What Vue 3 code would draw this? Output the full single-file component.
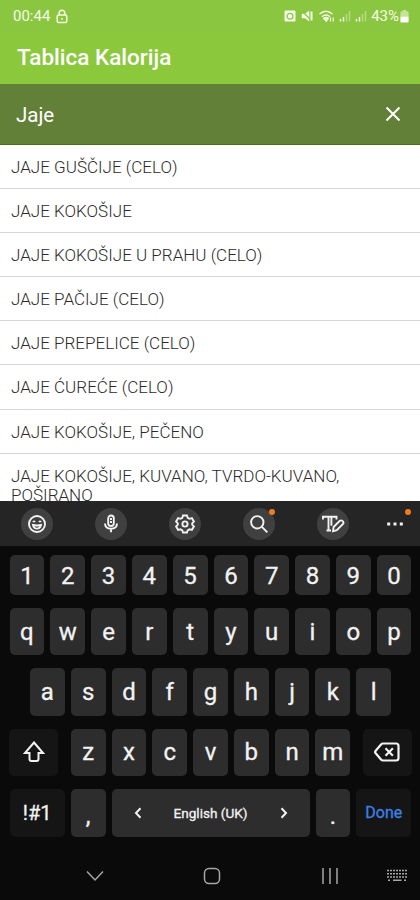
<template>
  <div class="screen">
    <div class="status-bar">
      <span class="time">00:44</span>
      <svg class="lock" viewBox="0 0 12 15">
        <rect x="1.2" y="6" width="9.6" height="7.6" rx="1.4" />
        <path d="M3.2 6V4a2.8 2.8 0 0 1 5.6 0v2M6 9v1.8" />
      </svg>
      <div class="status-icons">
        <svg class="alarm" viewBox="0 0 12 12">
          <path d="M1 1h10v10H1z" fill="currentColor" />
          <circle cx="6" cy="6.2" r="2.9" class="cut" />
          <path d="M6 4.7v1.7h1.4" class="thin" />
        </svg>
        <svg class="mute" viewBox="0 0 12 12">
          <path d="M1 4h3l4-3v10L4 8H1z" fill="currentColor" />
          <path d="M1 1l10 10" class="cut" />
          <path d="M10.5 1.5v9" class="bold" />
        </svg>
        <svg class="wifi" viewBox="0 0 16 13">
          <path d="M.5 4q6.500-5.600 13 0M3 6.700q4-3.400 8 0" />
          <path d="M4.800 8.300q2.200-1.800 4.400 0L7.200 11z" fill="currentColor" />
          <path d="M11.500 7.500v4M14.200 7.500v4" class="thin" />
        </svg>
        <svg v-for="n in 2" :key="n" class="signal" viewBox="0 0 12 12">
          <path d="M1.5 9v2.5M4.5 7v4.5" />
          <path d="M7.5 4v7.5M10.5 1v10.5" class="faint" />
        </svg>
        <span class="percent">43%</span>
        <svg class="battery" viewBox="0 0 9 13">
          <path d="M2.8 0h3.4v1.2H7.6q1 0 1 1V6.5H.4V2.2q0-1 1-1h1.4z" class="battery-empty" />
          <path d="M.4 6.5h8.2v5q0 1-1 1H1.4q-1 0-1-1z" class="battery-full" />
        </svg>
      </div>
    </div>

    <header class="app-bar">Tablica Kalorija</header>

    <div class="search-bar">
      <span class="query">{{ query }}</span>
      <svg class="clear" viewBox="0 0 16 16" @click="query = ''">
        <path d="M1.5 1.5l13 13M14.5 1.5l-13 13" />
      </svg>
    </div>

    <ul class="results">
      <li v-for="food in foods" :key="food" class="result">{{ food }}</li>
    </ul>

    <div class="keyboard">
      <div class="toolbar">
        <span class="tool">
          <svg viewBox="0 0 20 20">
            <circle cx="10" cy="10" r="8" />
            <path d="M6 11q4 1 8 0q-.8 3.6-4 3.6T6 11zM6 8q1-1.3 2 0M12 8q1-1.3 2 0" />
          </svg>
        </span>
        <span class="tool">
          <svg viewBox="0 0 20 20">
            <rect x="7.2" y="1.5" width="5.6" height="10.5" rx="2.8" />
            <path d="M4 9.5q0 5.2 6 5.2t6-5.2M10 14.7v3.6M9 5h2M9 8h2" />
          </svg>
        </span>
        <span class="tool">
          <svg viewBox="0 0 20 20">
            <path d="M8 1.5h4l.7 2.3 1.8 1 2.4-.6 2 3.4-1.7 1.8v1.3l1.7 1.8-2 3.4-2.4-.6-1.8 1-.7 2.2H8l-.7-2.2-1.8-1-2.400.6-2-3.4 1.700-1.800V9.400L1.100 7.600l2-3.400 2.400.6 1.800-1z" />
            <circle cx="10" cy="10" r="2.6" />
          </svg>
        </span>
        <span class="tool has-dot">
          <svg viewBox="0 0 20 20">
            <circle cx="8.3" cy="8.3" r="6.2" />
            <path d="M12.9 12.9l5.4 5.4" />
          </svg>
        </span>
        <span class="tool">
          <svg class="wide" viewBox="0 0 24 20">
            <path d="M2 5.5V2.7h13.500v2.800M7.500 2.700v13.600M10.400 2.700v9M5.500 16.500h4.500" />
            <path d="M12 17.300l.6-4.300 6.200-6.200q1.600-1 2.900.3t.3 2.900l-6.200 6.200z" />
          </svg>
        </span>
        <span class="tool plain has-dot">
          <svg viewBox="0 0 20 20">
            <path d="M2.2 8.500h3v3h-3zM8.500 8.500h3v3h-3zM14.800 8.500h3v3h-3z" class="dots" />
          </svg>
        </span>
      </div>

      <div class="keys">
        <div class="row digits">
          <span v-for="k in '1234567890'" :key="k" class="key">{{ k }}</span>
        </div>
        <div class="row">
          <span v-for="k in 'qwertyuiop'" :key="k" class="key">{{ k }}</span>
        </div>
        <div class="row">
          <span v-for="k in 'asdfghjkl'" :key="k" class="key">{{ k }}</span>
        </div>
        <div class="row spread">
          <span class="key dark shift">
            <svg viewBox="0 0 22 22">
              <path d="M11 1.500L20 12h-4.500v6q0 2-2 2h-5q-2 0-2-2v-6H2z" />
            </svg>
          </span>
          <div class="row">
            <span v-for="k in 'zxcvbnm'" :key="k" class="key">{{ k }}</span>
          </div>
          <span class="key dark backspace">
            <svg viewBox="0 0 26 20">
              <path d="M9 1.500h13q2.500 0 2.500 2.500v12q0 2.500-2.500 2.500H9q-1.200 0-2-1L1.500 11q-.8-1 0-2L7 2.500q.8-1 2-1z" />
              <path d="M11.500 6.300l7.400 7.400M18.900 6.300l-7.400 7.400" />
            </svg>
          </span>
        </div>
        <div class="row">
          <span class="key dark symbols">!#1</span>
          <span class="key punct">,</span>
          <span class="key space">
            <svg viewBox="0 0 8 12"><path d="M6.500 1.300L2 6l4.500 4.700" /></svg>
            <span>English (UK)</span>
            <svg viewBox="0 0 8 12"><path d="M1.500 1.300L6 6l-4.500 4.700" /></svg>
          </span>
          <span class="key punct">.</span>
          <span class="key dark done">Done</span>
        </div>
      </div>

      <nav class="nav-bar">
        <svg class="nav-hide" viewBox="0 0 18 12"><path d="M1 1.500l8 8.500 8-8.500" /></svg>
        <svg class="nav-home" viewBox="0 0 18 18"><rect x="1.500" y="1.500" width="15" height="15" rx="4.500" /></svg>
        <svg class="nav-recent" viewBox="0 0 18 18"><path d="M2 1v16M9 1v16M16 1v16" /></svg>
        <svg class="nav-keyboard" viewBox="0 0 20 13">
          <path d="M0 1.500h20M0 4.800h20M0 8.100h20" class="dashes" />
          <path d="M1 11.300h2M6 11.300h8.500M17 11.300h2" />
        </svg>
      </nav>
    </div>
  </div>
</template>

<script setup>
import { ref } from 'vue';

const query = ref('Jaje');

const foods = [
  'JAJE GUŠČIJE (CELO)',
  'JAJE KOKOŠIJE',
  'JAJE KOKOŠIJE U PRAHU (CELO)',
  'JAJE PAČIJE (CELO)',
  'JAJE PREPELICE (CELO)',
  'JAJE ĆUREĆE (CELO)',
  'JAJE KOKOŠIJE, PEČENO',
  'JAJE KOKOŠIJE, KUVANO, TVRDO-KUVANO, POŠIRANO'
];
</script>

<style>
body {
  margin: 0;
}
</style>

<style scoped>
.screen {
  display: flex;
  flex-direction: column;
  width: 420px;
  height: 900px;
  overflow: hidden;
  background: #fff;
  font-family: Roboto, "Liberation Sans", sans-serif;
}

svg {
  display: block;
  flex: none;
  fill: none;
  stroke: currentColor;
  stroke-width: 1.5;
}

.status-bar {
  display: flex;
  align-items: center;
  box-sizing: border-box;
  height: 32px;
  padding: 0 11px 0 13px;
  background: #8bc640;
  color: #f4fbe8;
  font-size: 15px;
}

.lock {
  width: 12px;
  height: 15px;
  margin-left: 6px;
}

.status-icons {
  display: flex;
  align-items: center;
  margin-left: auto;
}

.alarm {
  width: 12px;
  height: 12px;
  margin-right: 5px;
  stroke-width: 1;
}

.mute {
  width: 12px;
  height: 12px;
  margin-right: 6px;
  stroke-width: 0.5;
}

.cut {
  stroke: #8bc640;
  stroke-width: 1.2;
}

.thin {
  stroke-width: 1.2;
}

.bold {
  stroke-width: 2;
}

.wifi {
  width: 16px;
  height: 13px;
  margin-right: 4px;
}

.signal {
  width: 12px;
  height: 12px;
  margin-right: 4px;
}

.faint {
  opacity: 0.4;
}

.battery {
  width: 9px;
  height: 13px;
  margin-left: 1px;
  stroke: none;
}

.battery-empty {
  fill: #c5e39b;
}

.battery-full {
  fill: #fff;
}

.app-bar {
  height: 52px;
  padding-left: 17px;
  background: #8cc83c;
  color: #fff;
  font-size: 22.5px;
  font-weight: 500;
  line-height: 50px;
}

.search-bar {
  display: flex;
  align-items: center;
  justify-content: space-between;
  box-sizing: border-box;
  height: 61px;
  padding: 0 19px 0 16px;
  border-bottom: 1px solid #4f6b1c;
  background: #638038;
  color: #fff;
  font-size: 20.5px;
}

.query {
  padding-top: 2px;
}

.clear {
  width: 16px;
  height: 16px;
  stroke-width: 2;
}

.results {
  flex: 1;
  min-height: 0;
  margin: 0;
  padding: 0;
  overflow: hidden;
  list-style: none;
}

.result {
  box-sizing: border-box;
  min-height: 44.1px;
  padding: 13px 60px 10px 11px;
  border-bottom: 1px solid #d8d8d8;
  color: #2b2b2b;
  font-size: 17.05px;
  font-weight: 300;
  line-height: 19.5px;
}

.keyboard {
  height: 399px;
  background: #0a0a0a;
  color: #f2f2f2;
}

.toolbar {
  display: flex;
  align-items: center;
  gap: 42px;
  box-sizing: border-box;
  height: 45px;
  padding-left: 21px;
  background: #252525;
}

.tool {
  position: relative;
  display: flex;
  flex: none;
  align-items: center;
  justify-content: center;
  width: 32px;
  height: 32px;
  border-radius: 50%;
  background: #404040;
}

.tool svg {
  width: 20px;
  height: 20px;
  stroke-width: 1.9;
}

.tool svg.wide {
  width: 24px;
}

.tool.plain {
  margin-left: -12px;
  background: none;
}

.tool .dots {
  fill: currentColor;
  stroke: none;
}

.has-dot::after {
  position: absolute;
  top: 1px;
  right: 0;
  width: 6px;
  height: 6px;
  border-radius: 50%;
  background: #f47a20;
  content: "";
}

.keys {
  display: flex;
  flex-direction: column;
  gap: 13px;
  padding: 9px 8px 0 9px;
}

.row {
  display: flex;
  justify-content: center;
  gap: 6px;
}

.spread {
  justify-content: space-between;
}

.key {
  display: flex;
  align-items: center;
  justify-content: center;
  box-sizing: border-box;
  width: 34.8px;
  height: 47.4px;
  border-radius: 5px;
  background: #2d2d2d;
  font-size: 24px;
  -webkit-text-stroke: 0.3px currentColor;
}

.digits .key {
  height: 40px;
  padding-top: 1px;
}

.key.dark {
  background: #151515;
}

.key.shift,
.key.backspace {
  width: 49px;
}

.shift svg {
  width: 22px;
  height: 22px;
  stroke-width: 2;
}

.backspace svg {
  width: 26px;
  height: 20px;
  stroke-width: 2.2;
}

.key.symbols {
  width: 55px;
  font-size: 20px;
}

.key.punct {
  padding-top: 6px;
}

.key.space {
  justify-content: space-between;
  width: 198px;
  padding: 0 22px;
  font-size: 13.6px;
}

.space svg {
  width: 8px;
  height: 12px;
  stroke-width: 2;
}

.key.done {
  width: 55px;
  color: #3b82e6;
  font-size: 16px;
}

.nav-bar {
  display: flex;
  align-items: center;
  height: 78px;
  padding-left: 86px;
  color: #a6a6a6;
}

.nav-hide {
  width: 18px;
  height: 12px;
}

.nav-home {
  width: 18px;
  height: 18px;
  margin-left: 99px;
}

.nav-recent {
  width: 18px;
  height: 18px;
  margin-left: 100px;
}

.nav-keyboard {
  width: 20px;
  height: 13px;
  margin-left: 48px;
}

.nav-keyboard .dashes {
  stroke-dasharray: 2 1;
}
</style>
